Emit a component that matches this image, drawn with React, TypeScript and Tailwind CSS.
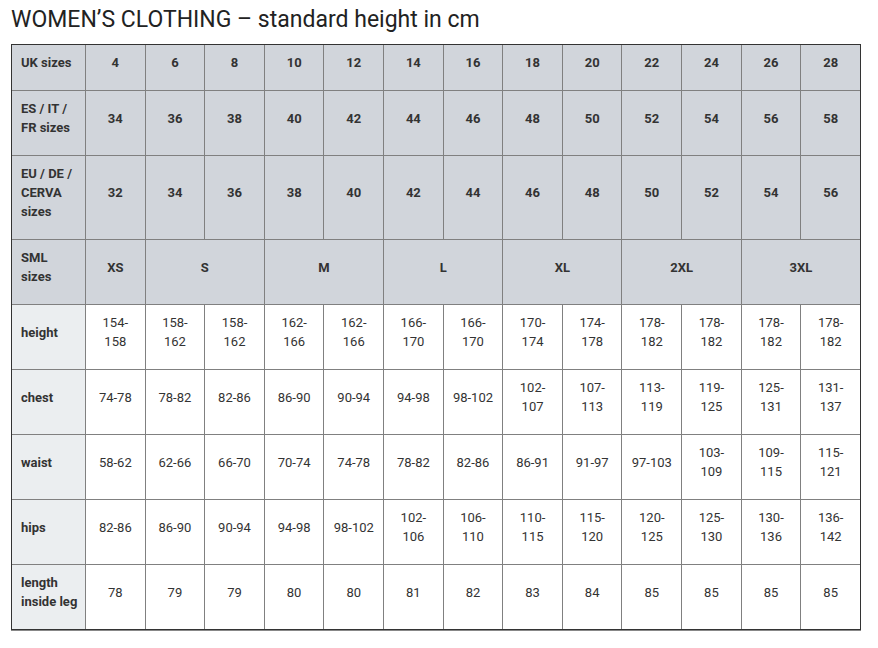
import React from "react";

const cols = 13;

type Cell = { t: string[]; span?: number };

const headerRows: { label: string[]; cells: Cell[] }[] = [
  { label: ["UK sizes"], cells: ["4","6","8","10","12","14","16","18","20","22","24","26","28"].map((v) => ({ t: [v] })) },
  { label: ["ES / IT /", "FR sizes"], cells: ["34","36","38","40","42","44","46","48","50","52","54","56","58"].map((v) => ({ t: [v] })) },
  { label: ["EU / DE /", "CERVA", "sizes"], cells: ["32","34","36","38","40","42","44","46","48","50","52","54","56"].map((v) => ({ t: [v] })) },
  {
    label: ["SML", "sizes"],
    cells: [
      { t: ["XS"] },
      { t: ["S"], span: 2 },
      { t: ["M"], span: 2 },
      { t: ["L"], span: 2 },
      { t: ["XL"], span: 2 },
      { t: ["2XL"], span: 2 },
      { t: ["3XL"], span: 2 },
    ],
  },
];

const sp = (s: string) => s.split("|");

const bodyRows: { label: string[]; cells: string[] }[] = [
  { label: ["height"], cells: ["154-|158","158-|162","158-|162","162-|166","162-|166","166-|170","166-|170","170-|174","174-|178","178-|182","178-|182","178-|182","178-|182"] },
  { label: ["chest"], cells: ["74-78","78-82","82-86","86-90","90-94","94-98","98-102","102-|107","107-|113","113-|119","119-|125","125-|131","131-|137"] },
  { label: ["waist"], cells: ["58-62","62-66","66-70","70-74","74-78","78-82","82-86","86-91","91-97","97-103","103-|109","109-|115","115-|121"] },
  { label: ["hips"], cells: ["82-86","86-90","90-94","94-98","98-102","102-|106","106-|110","110-|115","115-|120","120-|125","125-|130","130-|136","136-|142"] },
  { label: ["length", "inside leg"], cells: ["78","79","79","80","80","81","82","83","84","85","85","85","85"] },
];

function Lines({ t }: { t: string[] }) {
  return (
    <>
      {t.map((l, i) => (
        <div key={i} className="whitespace-nowrap">{l}</div>
      ))}
    </>
  );
}

export default function App() {
  return (
    <div
      className="w-[878px] h-[648px] bg-white text-[#333333]"
      style={{ fontFamily: "Roboto, 'Liberation Sans', sans-serif" }}
    >
      <h1 className="pl-[11px] pt-[5px] text-[23px] leading-[29px] text-[#222222] font-normal">
        WOMEN’S CLOTHING – standard height in cm
      </h1>
      <div className="pl-[11px] pt-[10px]">
        <table className="table-fixed border-collapse w-[850px] outline-1 outline-[#333333] -outline-offset-1 shadow-[0_1px_0_#888888] text-[13px] leading-[19px]">
          <colgroup>
            <col className="w-[74px]" />
            {Array.from({ length: cols }).map((_, i) => (
              <col key={i} />
            ))}
          </colgroup>
          <tbody>
            {headerRows.map((r, ri) => (
              <tr key={ri} className="bg-[#d1d5db]">
                <td className="border border-[#808080] pl-[9px] pr-[2px] pt-[8px] pb-[18px] text-left font-bold align-middle">
                  <Lines t={r.label} />
                </td>
                {r.cells.map((c, ci) => (
                  <td
                    key={ci}
                    colSpan={c.span}
                    className="border border-[#808080] pt-[8px] pb-[18px] text-center font-bold align-middle"
                  >
                    <Lines t={c.t} />
                  </td>
                ))}
              </tr>
            ))}
            {bodyRows.map((r, ri) => (
              <tr key={ri}>
                <td className="border border-[#808080] bg-[#ebeef0] pl-[9px] pr-[2px] pt-[8px] pb-[18px] text-left font-bold align-middle">
                  <Lines t={r.label} />
                </td>
                {r.cells.map((c, ci) => (
                  <td
                    key={ci}
                    className="border border-[#808080] bg-white pt-[8px] pb-[18px] text-center align-middle"
                  >
                    <Lines t={sp(c)} />
                  </td>
                ))}
              </tr>
            ))}
          </tbody>
        </table>
      </div>
    </div>
  );
}
